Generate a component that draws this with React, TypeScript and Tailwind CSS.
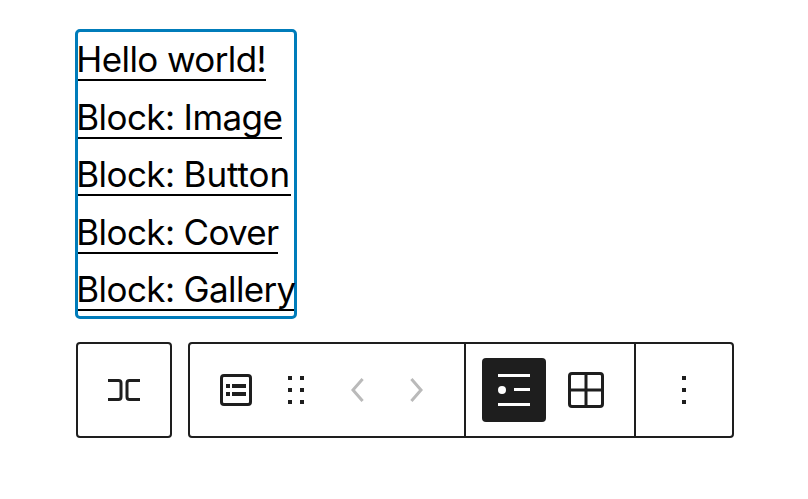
const links = [
  { label: 'Hello world!', rest: '', width: 'w-[188px]', text: 'tracking-[-0.65px]' },
  { label: 'Block: ', rest: 'Image', width: 'w-[204px]', text: 'tracking-[-0.6px]' },
  { label: 'Block: ', rest: 'Button', width: 'w-[213px]', text: 'tracking-[-0.1px]' },
  { label: 'Block: ', rest: 'Cover', width: 'w-[200px]', text: 'tracking-[-0.7px]' },
  { label: 'Block: ', rest: 'Gallery', width: 'w-[216px]', text: 'tracking-[-0.65px]' },
];

function StretchIcon() {
  return (
    <svg width="48" height="48" viewBox="0 0 48 48" fill="none" stroke="currentColor" strokeWidth="3">
      <path d="M8 14.5h10.5q2.5 0 2.5 2.5v14q0 2.5-2.5 2.5H8M40 14.5H29.5q-2.5 0-2.5 2.5v14q0 2.5 2.5 2.5H40" />
    </svg>
  );
}

function PostListIcon() {
  return (
    <svg width="48" height="48" viewBox="0 0 48 48" fill="currentColor">
      <rect x="9.5" y="9.5" width="29" height="29" rx="2.5" fill="none" stroke="currentColor" strokeWidth="3" />
      <path d="M14 18h4v4h-4zM20 18h14v4H20zM14 26h4v4h-4zM20 26h14v4H20z" />
    </svg>
  );
}

function DragIcon() {
  return (
    <svg width="48" height="48" viewBox="0 0 48 48" fill="currentColor">
      <path d="M16 10h4v4h-4zM28 10h4v4h-4zM16 22h4v4h-4zM28 22h4v4h-4zM16 34h4v4h-4zM28 34h4v4h-4z" />
    </svg>
  );
}

function ChevronIcon({ d }: { d: string }) {
  return (
    <svg width="48" height="48" viewBox="0 0 48 48" fill="none" stroke="#bababa" strokeWidth="3">
      <path d={d} />
    </svg>
  );
}

function ListViewIcon() {
  return (
    <svg width="48" height="48" viewBox="0 0 48 48" fill="currentColor">
      <path d="M8 8h32v3H8zM24 22h16v3H24zM8 37h32v3H8z" />
      <circle cx="12" cy="24" r="4" />
    </svg>
  );
}

function GridIcon() {
  return (
    <svg width="48" height="48" viewBox="0 0 48 48" fill="none" stroke="currentColor" strokeWidth="3">
      <rect x="7.5" y="7.5" width="33" height="33" rx="2.5" />
      <path d="M24 7v34M7 24h34" />
    </svg>
  );
}

function MoreIcon() {
  return (
    <svg width="48" height="48" viewBox="0 0 48 48" fill="currentColor">
      <path d="M22 10h4v4h-4zM22 22h4v4h-4zM22 34h4v4h-4z" />
    </svg>
  );
}

export default function App() {
  return (
    <main className="h-[499px] w-[808px] overflow-hidden bg-white pt-[29px] pl-[75px] text-[#1e1e1e]">
      <ul className="h-[290px] w-[222px] rounded-[5px] border-3 border-[#007cba] font-['Inter',sans-serif] text-[35px] text-black">
        {links.map((link) => (
          <li key={link.label + link.rest} className="h-[57.5px] whitespace-nowrap">
            <a href="#" className={`block h-[49px] border-b-2 border-black indent-[-1.7px] leading-[54px] tracking-[-0.6px] ${link.width}`}>
              {link.label}
              <span className={link.text}>{link.rest}</span>
            </a>
          </li>
        ))}
      </ul>
      <div className="mt-[23px] ml-px flex gap-4">
        <button className="flex h-24 w-24 items-center justify-center rounded-[4px] border-2 border-[#1e1e1e]">
          <StretchIcon />
        </button>
        <div className="flex h-24 w-[546px] rounded-[4px] border-2 border-[#1e1e1e]">
          <div className="flex w-[276px] items-center border-r-2 border-[#1e1e1e] pl-[22px]">
            <button><PostListIcon /></button>
            <button className="ml-3"><DragIcon /></button>
            <button className="ml-3"><ChevronIcon d="M30.6 13 21 24l9.6 11" /></button>
            <button className="ml-3"><ChevronIcon d="M19.4 13 29 24l-9.6 11" /></button>
          </div>
          <div className="flex w-[170px] items-center border-r-2 border-[#1e1e1e] pl-4">
            <button className="flex h-16 w-16 items-center justify-center rounded-[4px] bg-[#1e1e1e] text-white">
              <ListViewIcon />
            </button>
            <button className="ml-4"><GridIcon /></button>
          </div>
          <button className="flex flex-1 items-center justify-center">
            <MoreIcon />
          </button>
        </div>
      </div>
    </main>
  );
}
